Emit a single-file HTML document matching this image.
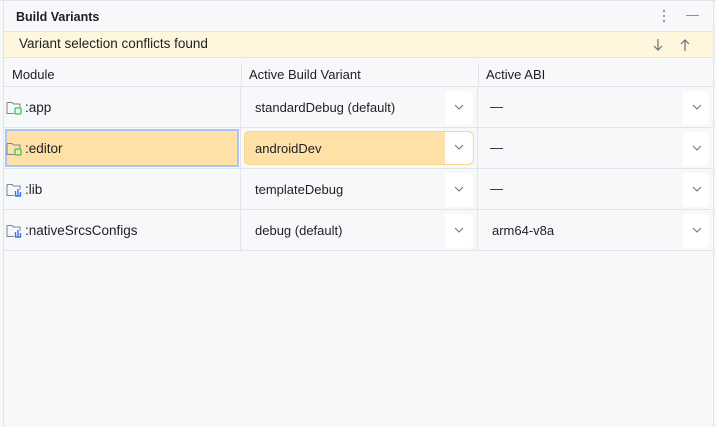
<!DOCTYPE html>
<html><head><meta charset="utf-8"><style>
*{margin:0;padding:0;box-sizing:border-box}
body{width:716px;height:427px;background:#f7f8fa;font-family:"Liberation Sans",sans-serif;color:#1e1f22;position:relative;overflow:hidden;font-size:13px}
.a{position:absolute}
.hl{position:absolute;height:1px;background:#e2e4e8}
.vl{position:absolute;width:1px;background:#e2e4e8}
.t{position:absolute;white-space:nowrap;line-height:16px}
.dd{position:absolute;background:#fff;border-radius:0 5px 5px 0;width:28px;height:34px}
.dd svg{position:absolute;left:9px;top:13px}
</style></head><body>
<div class="vl" style="left:3px;top:0;height:427px"></div>
<div class="vl" style="left:713px;top:0;height:427px"></div>
<div class="hl" style="left:0;top:0;width:716px"></div>
<div class="t" style="left:16px;top:9px;font-weight:bold;font-size:12.5px">Build Variants</div>
<svg class="a" style="left:662px;top:9px" width="4" height="14"><circle cx="2" cy="2" r="1.1" fill="#8c909c"/><circle cx="2" cy="7" r="1.1" fill="#8c909c"/><circle cx="2" cy="12" r="1.1" fill="#8c909c"/></svg>
<div class="a" style="left:686px;top:15px;width:13px;height:1px;background:#8c909c"></div>
<div class="hl" style="left:4px;top:31px;width:709px"></div>
<div class="a" style="left:4px;top:32px;width:709px;height:25px;background:#fff6de"></div>
<div class="t" style="left:19px;top:36px;font-size:13.5px">Variant selection conflicts found</div>
<svg class="a" style="left:652px;top:38px" width="12" height="14"><path d="M6 1V12M2 8L6 12L10 8" stroke="#6c707e" stroke-width="1.2" fill="none"/></svg>
<svg class="a" style="left:679px;top:38px" width="12" height="14"><path d="M6 13V2M2 6L6 2L10 6" stroke="#6c707e" stroke-width="1.2" fill="none"/></svg>
<div class="hl" style="left:4px;top:57px;width:709px"></div>
<div class="vl" style="left:241px;top:63px;height:22px"></div>
<div class="vl" style="left:478px;top:63px;height:22px"></div>
<div class="t" style="left:12px;top:67px">Module</div>
<div class="t" style="left:249px;top:67px">Active Build Variant</div>
<div class="t" style="left:486px;top:67px">Active ABI</div>
<div class="hl" style="left:4px;top:86px;width:709px"></div>
<div class="hl" style="left:4px;top:127px;width:709px"></div>
<div class="hl" style="left:4px;top:168px;width:709px"></div>
<div class="hl" style="left:4px;top:209px;width:709px"></div>
<div class="hl" style="left:4px;top:250px;width:709px"></div>
<div class="vl" style="left:240px;top:87px;height:163px"></div>
<div class="vl" style="left:477px;top:87px;height:163px"></div>
<div class="a" style="left:5px;top:129px;width:234px;height:38px;background:#ffe0a6;border:2px solid #a9c4f5"></div>
<div class="a" style="left:244px;top:131px;width:230px;height:34px;background:#ffe0a6;border:1px solid #f5d88a;border-radius:5px"></div>
<svg class="a" style="left:6px;top:100px" width="16" height="16"><path d="M1 2.5h5l1.5 1.5H14v4M8 13.5H1v-11" stroke="#80848f" fill="none"/><rect x="9" y="8" width="6" height="6" rx="1.2" stroke="#2fc95a" stroke-width="1.3" fill="none"/></svg>
<svg class="a" style="left:6px;top:141px" width="16" height="16"><path d="M1 2.5h5l1.5 1.5H14v4M8 13.5H1v-11" stroke="#80848f" fill="none"/><rect x="9" y="8" width="6" height="6" rx="1.2" stroke="#2fc95a" stroke-width="1.3" fill="none"/></svg>
<svg class="a" style="left:6px;top:182px" width="16" height="16"><path d="M1 2.5h5l1.5 1.5H14v4M8 13.5H1v-11" stroke="#80848f" fill="none"/><path d="M9.5 14V9M12 14V7M14.5 14V10M9 14h6" stroke="#3574f0" stroke-width="1.4"/></svg>
<svg class="a" style="left:6px;top:223px" width="16" height="16"><path d="M1 2.5h5l1.5 1.5H14v4M8 13.5H1v-11" stroke="#80848f" fill="none"/><path d="M9.5 14V9M12 14V7M14.5 14V10M9 14h6" stroke="#3574f0" stroke-width="1.4"/></svg>
<div class="t" style="left:25px;top:100px;font-size:13.5px">:app</div>
<div class="t" style="left:25px;top:141px;font-size:13.5px">:editor</div>
<div class="t" style="left:25px;top:182px;font-size:13.5px">:lib</div>
<div class="t" style="left:25px;top:223px;font-size:13.5px">:nativeSrcsConfigs</div>
<div class="t" style="left:255px;top:100px">standardDebug (default)</div>
<div class="t" style="left:255px;top:141px">androidDev</div>
<div class="t" style="left:255px;top:182px">templateDebug</div>
<div class="t" style="left:255px;top:223px">debug (default)</div>
<div class="a" style="left:490px;top:107px;width:13px;height:1px;background:#3a3b3e"></div>
<div class="a" style="left:490px;top:148px;width:13px;height:1px;background:#3a3b3e"></div>
<div class="a" style="left:490px;top:189px;width:13px;height:1px;background:#3a3b3e"></div>
<div class="t" style="left:492px;top:223px">arm64-v8a</div>
<div class="dd" style="left:445px;top:91px"><svg width="10" height="6"><path d="M1 1l4 4 4-4" stroke="#6c707e" fill="none"/></svg></div>
<div class="dd" style="left:445px;top:132px;height:32px"><svg width="10" height="6" style="top:12px"><path d="M1 1l4 4 4-4" stroke="#6c707e" fill="none"/></svg></div>
<div class="dd" style="left:445px;top:173px"><svg width="10" height="6"><path d="M1 1l4 4 4-4" stroke="#6c707e" fill="none"/></svg></div>
<div class="dd" style="left:445px;top:214px"><svg width="10" height="6"><path d="M1 1l4 4 4-4" stroke="#6c707e" fill="none"/></svg></div>
<div class="dd" style="left:683px;top:91px;width:26px"><svg width="10" height="6"><path d="M1 1l4 4 4-4" stroke="#6c707e" fill="none"/></svg></div>
<div class="dd" style="left:683px;top:132px;width:26px"><svg width="10" height="6"><path d="M1 1l4 4 4-4" stroke="#6c707e" fill="none"/></svg></div>
<div class="dd" style="left:683px;top:173px;width:26px"><svg width="10" height="6"><path d="M1 1l4 4 4-4" stroke="#6c707e" fill="none"/></svg></div>
<div class="dd" style="left:683px;top:214px;width:26px"><svg width="10" height="6"><path d="M1 1l4 4 4-4" stroke="#6c707e" fill="none"/></svg></div>
</body></html>
